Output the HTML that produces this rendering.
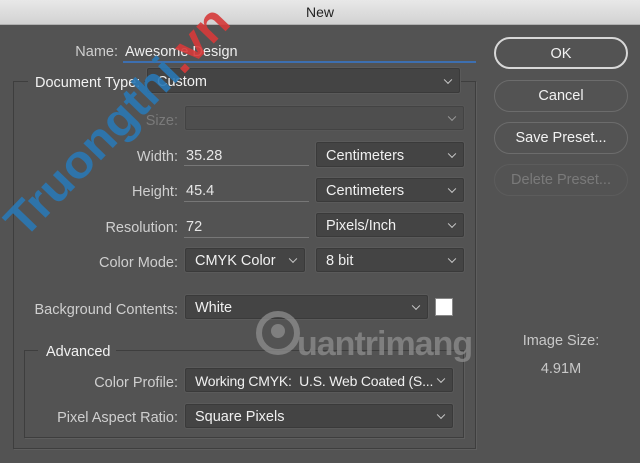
<!DOCTYPE html>
<html><head><meta charset="utf-8"><style>
*{margin:0;padding:0;box-sizing:border-box}
body{width:640px;height:463px;background:#535353;font-family:"Liberation Sans",sans-serif;font-size:14.5px;color:#e6e6e6;position:relative;overflow:hidden}
.abs{position:absolute}
.title{left:0;top:0;width:640px;height:25px;background:linear-gradient(#e8e8e8,#d2d2d2);border-bottom:1px solid #b0b0b0;text-align:center;line-height:25px;color:#222;font-size:14px}
.lbl{position:absolute;text-align:right;color:#cfcfcf;white-space:nowrap}
.dd{position:absolute;background:#444;border:1px solid #3a3a3a;box-shadow:0 0 0 1px #5a5a5a;border-radius:2px;color:#f0f0f0;padding-left:9px;white-space:nowrap;overflow:hidden}
.dd:after{content:"";position:absolute;right:8px;top:50%;width:5px;height:5px;border-right:1.3px solid #ccc;border-bottom:1.3px solid #ccc;transform:translateY(-70%) rotate(45deg)}
.inp{position:absolute;border-bottom:1px solid #777;color:#e6e6e6;padding-left:2px}
.btn{position:absolute;left:494px;width:134px;height:32px;border:1.5px solid #8a8a8a;border-radius:16px;text-align:center;line-height:29px;color:#f2f2f2}
.box{position:absolute;border:1px solid #3e3e3e;box-shadow:1px 1px 0 #5e5e5e}
</style></head><body>
<div class="abs title">New</div>

<div class="box" style="left:13px;top:81px;width:463px;height:368px"></div>
<div class="box" style="left:24px;top:350px;width:440px;height:88px"></div>
<div class="abs" style="left:28px;top:72px;width:116px;height:20px;background:#535353"></div>
<div class="abs" style="left:38px;top:340px;width:78px;height:20px;background:#535353"></div>

<div class="lbl" style="right:522px;top:44px">Name:</div>
<div class="abs" style="left:125px;top:44px;color:#eee">Awesome Design</div>
<div class="abs" style="left:123px;top:61px;width:353px;height:2px;background:#3d6fb0"></div>

<div class="abs" style="left:35px;top:75px;color:#f2f2f2">Document Type:</div>
<div class="dd" style="left:147px;top:68px;width:313px;height:25px;line-height:26px">Custom</div>

<div class="lbl" style="right:462px;top:113px;color:#7a7a7a">Size:</div>
<div class="dd" style="left:185px;top:106px;width:279px;height:24px;background:#4c4c4c;opacity:.6"></div>

<div class="lbl" style="right:462px;top:149px">Width:</div>
<div class="inp" style="left:184px;top:148px;width:125px;height:18px">35.28</div>
<div class="dd" style="left:316px;top:142px;width:148px;height:25px;line-height:26px">Centimeters</div>

<div class="lbl" style="right:462px;top:184px">Height:</div>
<div class="inp" style="left:184px;top:183px;width:125px;height:19px">45.4</div>
<div class="dd" style="left:316px;top:178px;width:148px;height:24px;line-height:25px">Centimeters</div>

<div class="lbl" style="right:462px;top:220px">Resolution:</div>
<div class="inp" style="left:184px;top:219px;width:125px;height:19px">72</div>
<div class="dd" style="left:316px;top:213px;width:148px;height:24px;line-height:25px">Pixels/Inch</div>

<div class="lbl" style="right:462px;top:255px">Color Mode:</div>
<div class="dd" style="left:185px;top:248px;width:120px;height:24px;line-height:25px">CMYK Color</div>
<div class="dd" style="left:316px;top:248px;width:148px;height:24px;line-height:25px">8 bit</div>

<div class="lbl" style="right:462px;top:302px">Background Contents:</div>
<div class="dd" style="left:185px;top:295px;width:243px;height:24px;line-height:25px">White</div>
<div class="abs" style="left:435px;top:298px;width:18px;height:18px;background:#fff;border:1px solid #888"></div>

<div class="abs" style="left:46px;top:344px;color:#f2f2f2">Advanced</div>
<div class="lbl" style="right:462px;top:375px">Color Profile:</div>
<div class="dd" style="left:185px;top:368px;width:268px;height:24px;line-height:25px;font-size:14px;letter-spacing:-0.2px">Working CMYK:&nbsp; U.S. Web Coated (S...</div>
<div class="lbl" style="right:462px;top:410px">Pixel Aspect Ratio:</div>
<div class="dd" style="left:185px;top:404px;width:268px;height:24px;line-height:25px">Square Pixels</div>

<div class="btn" style="top:37px;border-color:#d8d8d8;border-width:2px;line-height:30px">OK</div>
<div class="btn" style="top:80px;border-color:#6c6c6c;line-height:31px">Cancel</div>
<div class="btn" style="top:122px;border-color:#6c6c6c;line-height:31px">Save Preset...</div>
<div class="btn" style="top:164px;border-color:#5c5c5c;color:#7a7a7a;line-height:31px">Delete Preset...</div>

<div class="abs" style="left:500px;top:333px;width:122px;text-align:center;color:#c8c8c8">Image Size:</div>
<div class="abs" style="left:500px;top:361px;width:122px;text-align:center;color:#c8c8c8">4.91M</div>

<svg class="abs" style="left:0;top:0" width="640" height="463">
<g transform="translate(24,240) rotate(-46)" font-family="Liberation Sans" font-weight="bold" font-size="46">
<text fill="#2a78b4" opacity="0.9" textLength="300" lengthAdjust="spacingAndGlyphs">Truongthi<tspan fill="#d63a3a">.vn</tspan></text>
</g>
<g opacity="0.75">
<circle cx="278" cy="333" r="19" fill="none" stroke="#8e8e8e" stroke-width="6"/>
<circle cx="278" cy="331" r="7" fill="#8e8e8e"/>
<text x="297" y="355" font-family="Liberation Sans" font-weight="bold" font-size="34" fill="#8e8e8e" letter-spacing="-1">uantrimang</text>
</g>
</svg>
</body></html>
